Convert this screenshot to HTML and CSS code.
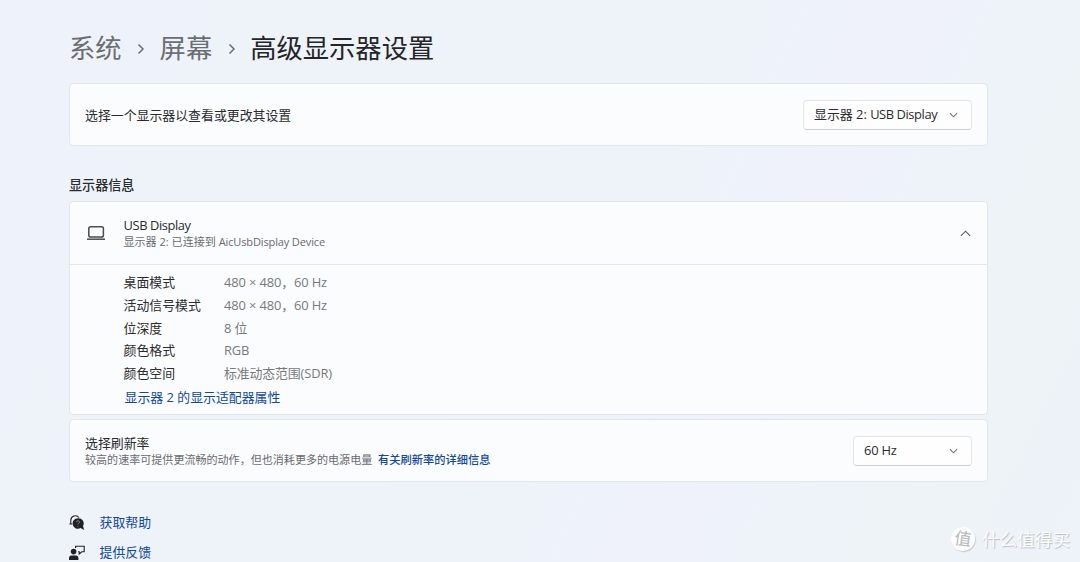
FILE: index.html
```html
<!DOCTYPE html>
<html lang="zh-CN">
<head>
  <meta charset="UTF-8" />
  <title>高级显示器设置</title>
  <link rel="stylesheet" href="styles.css">
</head>
<body>
  <main class="settings">

    <!-- Breadcrumb -->
    <h1 class="breadcrumb">
      <span class="crumb">系统</span>
      <svg class="crumb-arrow" viewBox="0 0 8 12"><path d="M1.5 1.5 6 6 1.5 10.5"/></svg>
      <span class="crumb">屏幕</span>
      <svg class="crumb-arrow" viewBox="0 0 8 12"><path d="M1.5 1.5 6 6 1.5 10.5"/></svg>
      <span class="crumb current">高级显示器设置</span>
    </h1>

    <!-- Display picker -->
    <section class="card row">
      <div class="title picker-title">选择一个显示器以查看或更改其设置</div>
      <button class="select select-display">
        <span>显示器 2: <span class="latin">USB Display</span></span>
        <svg class="chevron" viewBox="0 0 10 6"><path d="M1 1l4 4 4-4"/></svg>
      </button>
    </section>

    <h2 class="section-title">显示器信息</h2>

    <!-- Display information -->
    <section class="card info">
      <div class="info-header">
        <svg class="laptop" viewBox="0 0 20 16"><rect x="2.8" y="1.7" width="14.6" height="10.4" rx="1.8"/><path d="M1 14.2h18"/></svg>
        <div class="info-name">
          <div class="title latin">USB Display</div>
          <div class="subtitle">显示器 2: 已连接到 <span class="device">AicUsbDisplay Device</span></div>
        </div>
        <svg class="chevron chevron-up" viewBox="0 0 12 7"><path d="M1 6l5-5 5 5"/></svg>
      </div>
      <div class="info-body">
        <dl class="details">
          <dt>桌面模式</dt><dd>480 × 480，60 Hz</dd>
          <dt>活动信号模式</dt><dd>480 × 480，60 Hz</dd>
          <dt>位深度</dt><dd>8 位</dd>
          <dt>颜色格式</dt><dd>RGB</dd>
          <dt>颜色空间</dt><dd>标准动态范围(SDR)</dd>
        </dl>
        <a class="link adapter-link">显示器 2 的显示适配器属性</a>
      </div>
    </section>

    <!-- Refresh rate -->
    <section class="card row">
      <div>
        <div class="title">选择刷新率</div>
        <div class="subtitle">较高的速率可提供更流畅的动作，但也消耗更多的电源电量 <a class="link more-link">有关刷新率的详细信息</a></div>
      </div>
      <button class="select select-rate">
        <span class="rate">60 Hz</span>
        <svg class="chevron" viewBox="0 0 10 6"><path d="M1 1l4 4 4-4"/></svg>
      </button>
    </section>

    <!-- Help links -->
    <nav class="help">
      <a class="link help-link">
        <svg class="help-icon" viewBox="0 0 16 16">
          <path class="line" d="M1.8 8.8V5.4a4.6 4.6 0 0 1 8.2-2.9M.4 9h2.6"/>
          <path d="M8.9 3.2a5.3 5.3 0 1 0 2.6 9.9l3.7 1.8-1.2-3.8a5.3 5.3 0 0 0-5.1-7.9z"/>
          <path class="mark" d="M7.6 7.1a1.4 1.4 0 1 1 2.1 1.2c-.6.3-.8.6-.8 1.1M8.9 10.8v.7"/>
        </svg>
        <span>获取帮助</span>
      </a>
      <a class="link help-link">
        <svg class="help-icon" viewBox="0 0 16 16">
          <circle cx="4.6" cy="6.6" r="2.8"/>
          <path d="M0 15v-1.7c0-1.5.9-2.7 2.3-2.7h4.8c1.4 0 2.3 1.2 2.3 2.7V15z"/>
          <path class="line" d="M6.6 3V1.2h8.6v5.6h-2.4L10.2 9V6.8H9"/>
        </svg>
        <span>提供反馈</span>
      </a>
    </nav>
  </main>

  <div class="watermark">
    <span class="watermark-badge">值</span>
    <span>什么值得买</span>
  </div>
</body>
</html>
```
FILE: styles.css
```css
body {
  margin: 0;
  height: 562px;
  overflow: hidden;
  position: relative;
  font-family: "Open Sans", "Noto Sans CJK SC", sans-serif;
  font-size: 12.9px;
  line-height: 17px;
  color: #2a2b2d;
  background: linear-gradient(115deg, #eef3fb 0%, #eef3fa 22%, #edf3f8 45%, #eff2fb 68%, #edf3f7 86%, #eef2f9 100%);
}

.settings {
  width: 919px;
  margin-left: 69px;
  padding-top: 29px;
}

.breadcrumb {
  display: flex;
  align-items: center;
  height: 39px;
  margin: 0 0 15px;
  font-size: 26.3px;
  line-height: 39px;
  font-weight: 400;
}

.crumb {
  color: #6b6e72;
}

.crumb.current {
  color: #242527;
}

.crumb-arrow {
  width: 8px;
  height: 12px;
  margin: 0 14.5px 0 15.5px;
  fill: none;
  stroke: #6b6e72;
  stroke-width: 1.5;
}

.card {
  box-sizing: border-box;
  border: 1px solid #e1e6ea;
  border-radius: 4px;
  background: #fbfcfe;
}

.row {
  display: flex;
  align-items: center;
  justify-content: space-between;
  height: 63px;
  padding: 0 15px;
}

.title {
  font-size: 12.9px;
}

.picker-title {
  padding-top: 2px;
}

.latin {
  letter-spacing: -0.42px;
}

.device {
  letter-spacing: -0.15px;
}

.subtitle {
  font-size: 11.05px;
  line-height: 15px;
  color: #696b6e;
}

.select {
  display: flex;
  align-items: center;
  justify-content: space-between;
  box-sizing: border-box;
  height: 30px;
  padding: 0 13px 0 10px;
  border: 1px solid #e3e5e8;
  border-bottom-color: #cdcfd2;
  border-radius: 4px;
  background: #fefefe;
  font: inherit;
  color: #2a2b2d;
}

.select-display {
  width: 169px;
}

.select-rate {
  width: 119px;
}

.rate {
  letter-spacing: -0.2px;
}

.chevron {
  width: 9px;
  height: 6px;
  fill: none;
  stroke: #707276;
  stroke-width: 1.2;
}

.section-title {
  margin: 31px 0 7px;
  font-size: 13.1px;
  line-height: 17px;
  font-weight: 500;
}

.info {
  height: 214px;
  margin-bottom: 4px;
}

.info-header {
  display: flex;
  align-items: center;
  height: 62px;
  padding: 0 16px;
  border-bottom: 1px solid #e1e6ea;
}

.laptop {
  width: 20px;
  height: 16px;
  margin-right: 17.5px;
  fill: none;
  stroke: #4a4b4d;
  stroke-width: 1.5;
}

.info-name {
  flex: 1;
}

.chevron-up {
  width: 11px;
  height: 7px;
  stroke: #55575a;
}

.info-body {
  padding: 6.5px 0 0 53.5px;
}

.details {
  display: grid;
  grid-template-columns: 100.5px 1fr;
  grid-auto-rows: 22.7px;
  align-items: center;
  margin: 0;
}

.details dd {
  margin: 0;
  color: #77797c;
  letter-spacing: -0.12px;
}

.link {
  color: #12489b;
}

.adapter-link {
  display: block;
  margin: 4.5px 0 0 1px;
}

.more-link {
  margin-left: 3px;
  font-weight: 500;
  font-size: 11.25px;
}

.help {
  display: flex;
  flex-direction: column;
  gap: 13px;
  margin-top: 32px;
}

.help-link {
  display: flex;
  align-items: center;
  gap: 14.5px;
}

.help-icon {
  width: 16px;
  height: 16px;
  fill: #202124;
}

.help-icon .line {
  fill: none;
  stroke: #202124;
  stroke-width: 1.1;
}

.help-icon .mark {
  fill: none;
  stroke: #8d9094;
  stroke-width: 1;
}

.watermark {
  position: absolute;
  right: 10px;
  bottom: 10px;
  display: flex;
  align-items: center;
  gap: 7px;
  font-size: 17.6px;
  line-height: 26px;
  color: #fdfdfe;
  text-shadow: 1px 1px 1px #b9bdc3;
}

.watermark-badge {
  width: 24px;
  height: 24px;
  border-radius: 50%;
  background: #fdfdfe;
  box-shadow: 1px 1px 1px #c8ccd1;
  font-size: 17px;
  line-height: 23px;
  text-align: center;
  text-shadow: none;
  color: #b4b8bd;
  transform: rotate(8deg);
}
```
